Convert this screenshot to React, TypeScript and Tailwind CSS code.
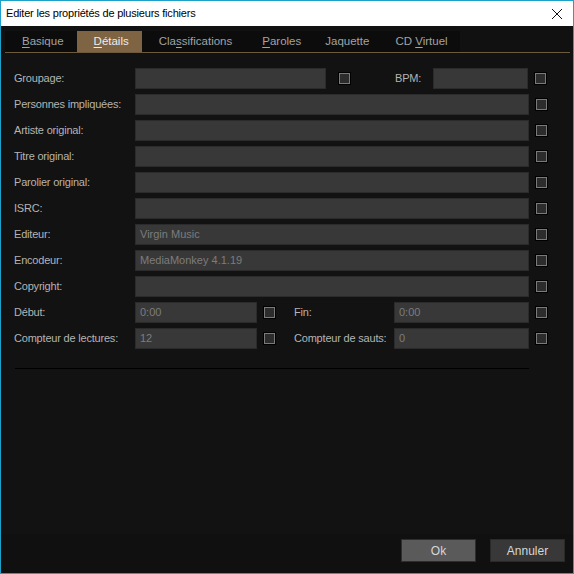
import React from "react";

const label = "text-[11px] tracking-[-0.2px] text-[#b4b4b4] leading-none whitespace-nowrap";
const box =
  "h-[21px] bg-[#383838] border border-[#2b2b2b] text-[11px] text-[#7c7c7c] flex items-center px-[4px] leading-none";

function Check() {
  return (
    <div className="w-[13px] h-[13px] shrink-0 border border-black">
      <div className="w-full h-full border border-[#7a7a7a] bg-[#2c2c2c]" />
    </div>
  );
}

function Field({ value, className = "" }: { value?: string; className?: string }) {
  return <div className={`${box} ${className}`}>{value}</div>;
}

const TABS: { key: string; pre: string; u: string; post: string; pad: string }[] = [
  { key: "basique", pre: "", u: "B", post: "asique", pad: "pl-[17px] pr-[13px]" },
  { key: "details", pre: "", u: "D", post: "étails", pad: "pl-[17px] pr-[13px]" },
  { key: "classif", pre: "Cla", u: "s", post: "sifications", pad: "pl-[17px] pr-[13px]" },
  { key: "paroles", pre: "", u: "P", post: "aroles", pad: "pl-[17px] pr-[12px]" },
  { key: "jaquette", pre: "Jaquette", u: "", post: "", pad: "pl-[12px] pr-[13px]" },
  { key: "cd", pre: "CD ", u: "V", post: "irtuel", pad: "pl-[13px] pr-[12px]" },
];

const FULL_ROWS: { name: string; value?: string }[] = [
  { name: "Personnes impliquées:" },
  { name: "Artiste original:" },
  { name: "Titre original:" },
  { name: "Parolier original:" },
  { name: "ISRC:" },
  { name: "Editeur:", value: "Virgin Music" },
  { name: "Encodeur:", value: "MediaMonkey 4.1.19" },
  { name: "Copyright:" },
];

export default function App() {
  return (
    <div
      className="w-[574px] h-[574px] flex flex-col border border-[#1ba1ca] bg-[#111111] overflow-hidden"
      style={{ fontFamily: "'Liberation Sans', Arial, sans-serif" }}
    >
      {/* title bar */}
      <div className="h-[25px] shrink-0 bg-white flex items-center justify-between pl-[5px] pr-[10px]">
        <span className="text-[11px] text-black tracking-[-0.2px]">
          Editer les propriétés de plusieurs fichiers
        </span>
        <svg width="12" height="12" viewBox="0 0 12 12">
          <path d="M1 1L11 11M11 1L1 11" stroke="#111" strokeWidth="1" />
        </svg>
      </div>

      {/* tabs */}
      <div className="mt-[5px] ml-[4px] mr-[3px] border-b border-[#6d5a3c]">
        <div className="flex w-fit h-[21px] bg-[#0c0c0c] text-[11.5px] leading-none">
          {TABS.map((t) => (
            <div
              key={t.key}
              className={`${t.pad} flex items-center ${
                t.key === "details" ? "bg-[#7f6444] text-[#ececec]" : "text-[#a3a3a3]"
              }`}
            >
              <span>
                {t.pre}
                {t.u && <span className="underline underline-offset-2">{t.u}</span>}
                {t.post}
              </span>
            </div>
          ))}
        </div>
      </div>

      {/* form */}
      <div className="flex-1 bg-[#121212] pl-[13px] pr-[24px] pt-[15px] flex flex-col gap-[5px]">
        <div className="flex items-center h-[21px]">
          <div className={`${label} w-[121px]`}>Groupage:</div>
          <Field className="w-[191px]" />
          <div className="ml-[12px]">
            <Check />
          </div>
          <div className={`${label} ml-[44px] w-[38px]`}>BPM:</div>
          <Field className="w-[95px]" />
          <div className="ml-[6px]">
            <Check />
          </div>
        </div>

        {FULL_ROWS.map((r) => (
          <div key={r.name} className="flex items-center h-[21px]">
            <div className={`${label} w-[121px]`}>{r.name}</div>
            <Field className="w-[394px]" value={r.value} />
            <div className="ml-[6px]">
              <Check />
            </div>
          </div>
        ))}

        <div className="flex items-center h-[21px]">
          <div className={`${label} w-[121px]`}>Début:</div>
          <Field className="w-[122px]" value="0:00" />
          <div className="ml-[6px]">
            <Check />
          </div>
          <div className={`${label} ml-[18px] w-[100px]`}>Fin:</div>
          <Field className="w-[135px]" value="0:00" />
          <div className="ml-[6px]">
            <Check />
          </div>
        </div>

        <div className="flex items-center h-[21px]">
          <div className={`${label} w-[121px]`}>Compteur de lectures:</div>
          <Field className="w-[122px]" value="12" />
          <div className="ml-[6px]">
            <Check />
          </div>
          <div className={`${label} ml-[18px] w-[100px]`}>Compteur de sauts:</div>
          <Field className="w-[135px]" value="0" />
          <div className="ml-[6px]">
            <Check />
          </div>
        </div>

        <div className="mt-[14px] ml-[1px] w-[514px] h-px bg-black" />
      </div>

      {/* footer */}
      <div className="h-[39px] shrink-0 bg-[#101010] flex items-start justify-end gap-[14px] pt-[5px] pr-[8px]">
        <button className="w-[75px] h-[23px] bg-[#5a5a5a] border border-[#2e2e2e] text-[12px] text-[#d6d6d6]">
          Ok
        </button>
        <button className="w-[75px] h-[23px] bg-[#383838] border border-[#2a2a2a] text-[12px] text-[#d6d6d6]">
          Annuler
        </button>
      </div>
    </div>
  );
}
